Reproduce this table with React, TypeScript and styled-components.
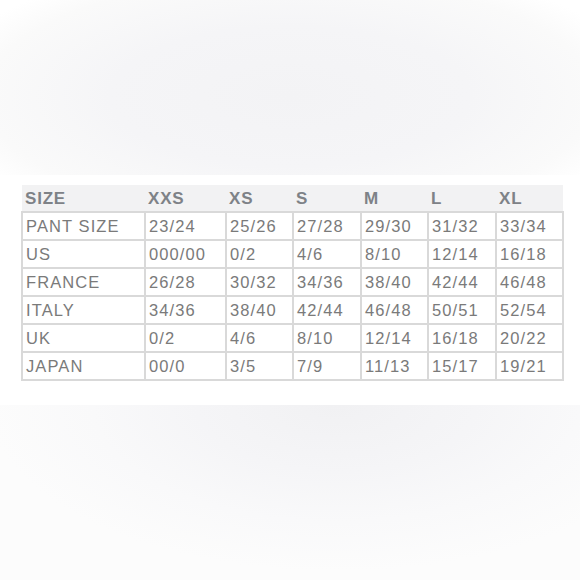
import React from 'react';
import styled, { createGlobalStyle } from 'styled-components';

const GlobalStyle = createGlobalStyle`
  html, body {
    margin: 0;
    padding: 0;
    background: #ffffff;
  }
  body {
    font-family: "Liberation Sans", Arial, sans-serif;
  }
`;

interface SizeRow {
  label: string;
  values: string[];
}

const sizes = ['XXS', 'XS', 'S', 'M', 'L', 'XL'];

const rows: SizeRow[] = [
  { label: 'PANT SIZE', values: ['23/24', '25/26', '27/28', '29/30', '31/32', '33/34'] },
  { label: 'US', values: ['000/00', '0/2', '4/6', '8/10', '12/14', '16/18'] },
  { label: 'FRANCE', values: ['26/28', '30/32', '34/36', '38/40', '42/44', '46/48'] },
  { label: 'ITALY', values: ['34/36', '38/40', '42/44', '46/48', '50/51', '52/54'] },
  { label: 'UK', values: ['0/2', '4/6', '8/10', '12/14', '16/18', '20/22'] },
  { label: 'JAPAN', values: ['00/0', '3/5', '7/9', '11/13', '15/17', '19/21'] },
];

// column widths between the grid lines
const colWidths = [123, 81, 67, 68, 67, 68, 67];

const SizeChart: React.FC = () => {
  return (
    <Page>
      <GlobalStyle />
      <TopShade />
      <ChartBand>
        <Table>
          <colgroup>
            {colWidths.map((w, i) => (
              <col key={i} style={{ width: w }} />
            ))}
          </colgroup>
          <thead>
            <HeadRow>
              <HeadCell>SIZE</HeadCell>
              {sizes.map(size => (
                <HeadCell key={size}>{size}</HeadCell>
              ))}
            </HeadRow>
          </thead>
          <tbody>
            {rows.map(row => (
              <tr key={row.label}>
                <Cell>{row.label}</Cell>
                {row.values.map((value, i) => (
                  <Cell key={i}>{value}</Cell>
                ))}
              </tr>
            ))}
          </tbody>
        </Table>
      </ChartBand>
      <BottomShade />
    </Page>
  );
};

const Page = styled.div`
  width: 580px;
  height: 580px;
  display: flex;
  flex-direction: column;
  overflow: hidden;
`;

const TopShade = styled.div`
  height: 175px;
  background: radial-gradient(
    ellipse 62% 80% at 50% 55%,
    #f3f3f5 0%,
    #f5f5f7 50%,
    #fafafa 85%,
    #ffffff 100%
  );
`;

const BottomShade = styled.div`
  height: 175px;
  background: radial-gradient(
    ellipse 60% 95% at 58% 0%,
    #f1f1f3 0%,
    #f5f5f7 40%,
    #f9f9fa 70%,
    #fcfcfc 100%
  );
`;

const ChartBand = styled.div`
  height: 230px;
  background: #ffffff;
  padding: 10px 0 0 21px;
  box-sizing: border-box;
`;

const Table = styled.table`
  border-collapse: collapse;
  table-layout: fixed;
  width: 543px;
`;

const HeadRow = styled.tr`
  background: #f2f2f3;
`;

const HeadCell = styled.th`
  height: 27px;
  padding: 1px 0 0 3px;
  text-align: left;
  font-weight: 700;
  font-size: 17px;
  letter-spacing: 0.8px;
  color: #7e8287;
  box-sizing: border-box;
  border: none;
`;

const Cell = styled.td`
  height: 28px;
  padding: 1px 0 0 3px;
  border: 2px solid #d9d9d9;
  font-size: 16.5px;
  letter-spacing: 1.1px;
  color: #7a7a7a;
  white-space: nowrap;
  box-sizing: border-box;
`;

export default SizeChart;
